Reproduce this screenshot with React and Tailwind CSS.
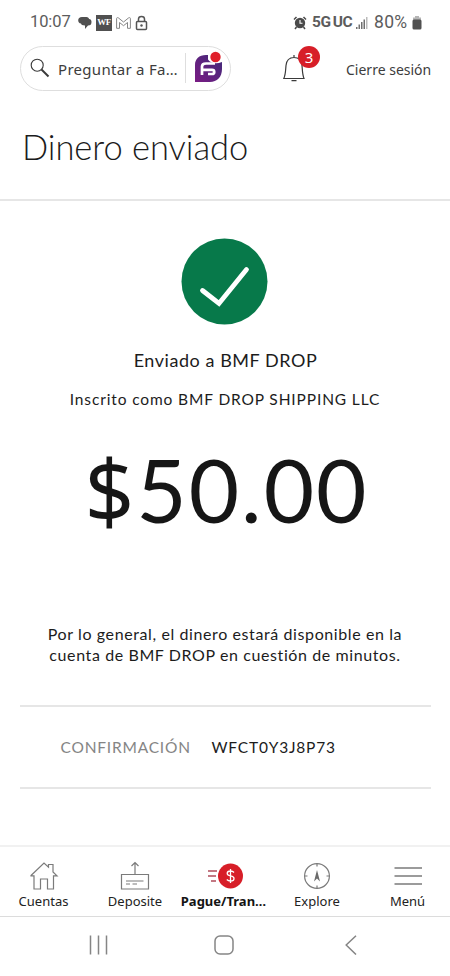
import React from 'react';

const TABS = [
  { id: 'accounts', label: 'Cuentas', icon: HomeIcon },
  { id: 'deposit', label: 'Deposite', icon: DepositIcon },
  { id: 'pay', label: 'Pague/Tran…', icon: PayIcon },
  { id: 'explore', label: 'Explore', icon: CompassIcon },
  { id: 'menu', label: 'Menú', icon: MenuIcon },
];

function HomeIcon() {
  return (
    <svg width="30" height="30" viewBox="0 0 30 30" fill="none" stroke="#7b7b7b" strokeWidth="1.2">
      <path d="M2 14.5 15 2 19.5 6.2V3.5H24V11L28 14.8H24.5V28H18.5V18H11.5V28H5V14.8H2Z" />
    </svg>
  );
}

function DepositIcon() {
  return (
    <svg width="30" height="30" viewBox="0 0 30 30" fill="none" stroke="#7b7b7b" strokeWidth="1.2">
      <path d="M1.5 13.5H28.5V28H1.5ZM15 13V1.5M11.5 5 15 1.5 18.5 5M6 20H23.5M6 23H10M12.5 23H17" />
    </svg>
  );
}

function PayIcon() {
  return (
    <svg className="relative left-px" width="36" height="30" viewBox="0 0 36 30" fill="none">
      <path d="M1 10H10M1 15H9M4 20H9" stroke="#b04c5b" strokeWidth="1.3" />
      <circle cx="23.5" cy="15" r="12.5" fill="#d71e28" />
      <path d="M27 11.5C26.3 10.6 25 10 23.5 10 21.5 10 20.2 11 20.2 12.5 20.2 16 27 13.8 27 17.4 27 19 25.5 20 23.5 20 21.9 20 20.7 19.5 19.8 18.5M23.5 8V22" stroke="#fff" strokeWidth="1.3" />
    </svg>
  );
}

function CompassIcon() {
  return (
    <svg width="30" height="30" viewBox="0 0 30 30" fill="none" stroke="#7b7b7b" strokeWidth="1.2">
      <circle cx="15" cy="15" r="12.4" />
      <path d="M15 2.5V5.5M15 24.5V27.5M2.5 15H5.5M24.5 15H27.5" />
      <path d="M15 9 18 20.5 15 17.5 12 20.5Z" fill="#6b6b6b" stroke="none" />
    </svg>
  );
}

function MenuIcon() {
  return (
    <svg width="30" height="30" viewBox="0 0 30 30" fill="none" stroke="#7b7b7b" strokeWidth="1.3">
      <path d="M1.5 7H29M1.5 15H29M1.5 23H29" />
    </svg>
  );
}

function StatusBar() {
  return (
    <div className="flex h-[45px] items-center justify-between pr-[28px] pl-[30px] text-[#5c5c5c]">
      <div className="flex items-center">
        <span className="w-[48px] font-['Roboto'] text-[16.5px] tracking-[-0.1px] whitespace-nowrap">10:07</span>
        <svg width="14" height="14" viewBox="0 0 14 14" fill="#505050">
          <path d="M4 1H8.5C10 1 11 2 11 3 13 3 13.5 4.5 13.5 6 13.5 8.5 12.5 9.5 10 9.5L7 13V9.5C4.5 9.5 3 8.5 3 7.5 1.2 7.3.2 6 .2 4.500.2 2.3 1.5 1 4 1Z" />
        </svg>
        <div className="ml-[4px] flex h-4 w-4 items-center justify-center bg-[#505050] font-['Liberation_Serif'] text-[9px] leading-none font-bold tracking-[-0.5px] text-white">WF</div>
        <svg className="ml-[4px]" width="15" height="12" viewBox="0 0 15 12" fill="none" stroke="#858585" strokeWidth="1">
          <path d="M.6 11.3V1.5C.6.5 1.7.3 2.4.9L7.5 5 12.6.9C13.3.3 14.4.5 14.4 1.5V11.3H11.5V5.5L7.5 8.7 3.5 5.5V11.3Z" />
        </svg>
        <svg className="ml-[4px]" width="13" height="16" viewBox="0 0 13 16" fill="none" stroke="#555" strokeWidth="1.5">
          <rect x="1.5" y="6.5" width="10" height="8" rx="1" />
          <path d="M3.5 6.5V4C3.5 .5 9.5 .5 9.5 4V6.5" />
          <circle cx="6.5" cy="10.5" r="1.2" fill="#555" stroke="none" />
        </svg>
      </div>
      <div className="flex items-center">
        <svg width="14" height="14" viewBox="0 0 14 14" fill="none" stroke="#4a4a4a">
          <circle cx="7" cy="7" r="5.2" fill="#4a4a4a" stroke="none" />
          <path d="M1 3.5 3.5 1M10.5 1 13 3.5M3.5 11 2 13M10.5 11 12 13" strokeWidth="1.5" />
          <path d="M7 4V7.3H9.5" stroke="#fff" strokeWidth="1.1" />
        </svg>
        <span className="ml-[5px] w-[44px] font-['Roboto'] text-[15.5px] font-bold tracking-[-0.4px] whitespace-nowrap">
          5G<span className="ml-[2px]">UC</span>
        </span>
        <svg width="12" height="12" viewBox="0 0 12 12" fill="#707070">
          <path d="M0 10H1.5V12H0ZM2.5 7.5H4V12H2.5ZM5 5H6.5V12H5ZM7.5 2.5H9V12H7.5Z" />
          <path d="M10 0H11.5V12H10Z" fill="#bbb" />
        </svg>
        <span className="ml-[6px] w-[38px] font-['Roboto'] text-[17.5px] tracking-[0.3px] whitespace-nowrap">80%</span>
        <svg width="10" height="14" viewBox="0 0 10 14" fill="#505050">
          <path d="M3 0H7V1.5H9V4H1V1.5H3Z" fill="#b5b5b5" />
          <rect x=".5" y="3.5" width="9" height="10" rx="1.5" />
        </svg>
      </div>
    </div>
  );
}

function FargoLogo() {
  return (
    <svg width="30" height="32" viewBox="0 0 30 32">
      <defs>
        <linearGradient id="fargo" x1="1" y1="0" x2="0" y2="1">
          <stop offset="0" stopColor="#3f2a78" />
          <stop offset="1" stopColor="#7a1c84" />
        </linearGradient>
      </defs>
      <path d="M12 4H14V8.5C16 12 22 13.5 28 11V18C28 26 23 31 16 31H1V14C1 8 5 4 12 4Z" fill="url(#fargo)" />
      <path d="M21 12.5H12C9.5 12.5 8 13.5 8 15.5V24M8 18.8H18C21 18.8 21 23 18 23H14" fill="none" stroke="#fff" strokeWidth="2.7" />
      <circle cx="21.5" cy="6" r="5.2" fill="#e0202b" />
    </svg>
  );
}

function Header() {
  return (
    <header className="flex h-[46px] items-center pl-5">
      <div className="flex h-[45px] w-[211px] items-center rounded-full border border-[#dedede] pl-[9px]">
        <svg width="20" height="20" viewBox="0 0 20 20" fill="none" stroke="#3a3a3a">
          <circle cx="7.2" cy="7.2" r="6" strokeWidth="1.1" />
          <path d="M11.5 11.5 18.5 18.5" strokeWidth="2" />
        </svg>
        <span className="ml-[8px] w-[127px] pt-0.5 text-[15px] tracking-[0.3px] whitespace-nowrap text-[#3d3d3d]">Preguntar a Fa…</span>
        <div className="h-[30px] w-px bg-[#dedede]" />
        <div className="-mt-0.5 ml-[8px]">
          <FargoLogo />
        </div>
      </div>
      <div className="relative ml-[52px] h-[46px] w-[38px]">
        <svg className="absolute top-[9px] left-0" width="22" height="28" viewBox="0 0 22 28" fill="none" stroke="#3a3a3a" strokeWidth="1.2">
          <path d="M.8 24.5H21C19.3 20.5 19.5 16.5 19 11.5 18.5 6.3 15.5 3.5 11 3.5 6.5 3.5 3.5 6.3 3 11.5 2.5 16.5 2.7 20.5.8 24.5ZM11 3.5V1M8.5 26.7H13.5" />
        </svg>
        <span className="absolute top-[1px] left-[15px] flex h-[22px] w-[22px] items-center justify-center rounded-full bg-[#d71e28] text-[15px] leading-none text-white">3</span>
      </div>
      <a className="ml-[25px] pt-0.5 text-[14px] whitespace-nowrap text-[#3d3d3d]">Cierre sesión</a>
    </header>
  );
}

function TabBar() {
  return (
    <nav className="grid h-[72px] grid-cols-[87px_96px_81px_106px_75px] border-t-2 border-b border-t-[#f1f1f1] border-b-[#dcdcdc]">
      {TABS.map(({ id, label, icon: Icon }) => (
        <div key={id} className="flex flex-col items-center pt-[14px]">
          <Icon />
          <span className={id === 'pay' ? 'text-[13px] leading-5 font-bold whitespace-nowrap text-[#141414]' : 'text-[13px] leading-5 whitespace-nowrap text-[#222]'}>
            {label}
          </span>
        </div>
      ))}
    </nav>
  );
}

function SystemNav() {
  return (
    <div className="flex h-[59px] items-center pb-[3px] pl-[89px]">
      <svg width="19" height="20" viewBox="0 0 19 20" stroke="#858585" strokeWidth="1.5">
        <path d="M1.5 .5V19.5M9.5 .5V19.5M17.5 .5V19.5" />
      </svg>
      <svg className="ml-[106px]" width="20" height="20" viewBox="0 0 20 20" fill="none" stroke="#858585" strokeWidth="1.5">
        <rect x="1" y="1" width="18" height="18" rx="5" />
      </svg>
      <svg className="ml-[111px]" width="12" height="20" viewBox="0 0 12 20" fill="none" stroke="#858585" strokeWidth="1.5">
        <path d="M11 .7 1.2 10 11 19.5" />
      </svg>
    </div>
  );
}

export default function App() {
  return (
    <div className="flex h-[976px] w-[450px] flex-col overflow-hidden bg-white font-['Noto_Sans','Open_Sans',sans-serif] text-[#1c1c1c]">
      <StatusBar />
      <Header />
      <div className="flex h-[110px] items-center border-b-2 border-[#e6e6e6] pl-[22px]">
        <h1 className="pt-[5px] font-['Lato'] text-[34.5px] leading-none font-light tracking-[-0.05px] whitespace-nowrap">Dinero enviado</h1>
      </div>
      <main className="flex flex-1 flex-col items-center pt-[37px] font-['Lato','Noto_Sans',sans-serif]">
        <svg className="-ml-px" width="87" height="87" viewBox="0 0 87 87" fill="none">
          <circle cx="43.5" cy="43.5" r="43" fill="#07794a" />
          <path d="M21.5 52.5 38 65.5 65.5 31.5" stroke="#fff" strokeWidth="4.8" strokeLinecap="round" />
        </svg>
        <p className="mt-[23px] pl-px text-[18px] leading-6 tracking-[0.55px] whitespace-nowrap">Enviado a BMF DROP</p>
        <p className="mt-[15px] text-[15.5px] leading-6 tracking-[0.87px] whitespace-nowrap">Inscrito como BMF DROP SHIPPING LLC</p>
        <div className="mt-[30px] h-[96px] pl-[3px] text-[87px] leading-[96px] tracking-[2px] whitespace-nowrap text-[#161616]">
          <span className="font-['Noto_Sans'] tracking-[2px]">$</span>50.00
        </div>
        <p className="mt-[86px] text-center text-[16px] leading-[21px] tracking-[0.6px] whitespace-nowrap">
          Por lo general, el dinero estará disponible en la
          <br />
          cuenta de BMF DROP en cuestión de minutos.
        </p>
        <div className="mt-[40px] flex h-[84px] w-[411px] items-center border-y-2 border-[#e6e6e6] pt-px pl-[41px] text-[15.5px] tracking-[0.8px] whitespace-nowrap">
          <span className="w-[151px] text-[#858585]">CONFIRMACIÓN</span>
          <span>WFCT0Y3J8P73</span>
        </div>
      </main>
      <TabBar />
      <SystemNav />
    </div>
  );
}
